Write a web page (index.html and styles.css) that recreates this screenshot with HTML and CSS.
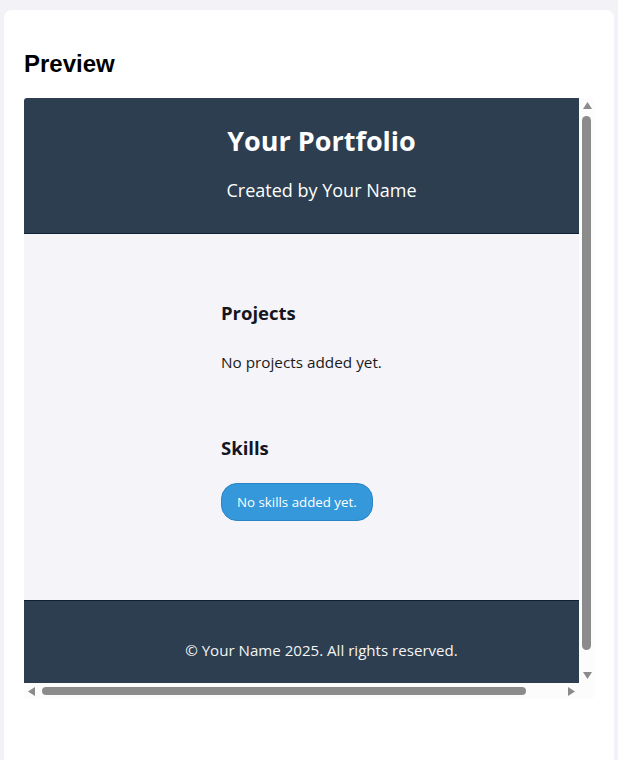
FILE: index.html
```html
<!DOCTYPE html>
<html lang="en">
<head>
<meta charset="utf-8">
<title>Preview</title>
<link rel="stylesheet" href="styles.css">
</head>
<body>
  <div class="card">
    <h2 class="card-title">Preview</h2>
    <div class="frame">
      <div class="viewport">
        <div class="site">
          <header class="site-header">
            <h1 class="site-title">Your Portfolio</h1>
            <p class="site-subtitle">Created by Your Name</p>
          </header>
          <main class="site-main">
            <section class="block">
              <h2 class="block-title">Projects</h2>
              <p class="block-text">No projects added yet.</p>
            </section>
            <section class="block block-skills">
              <h2 class="block-title">Skills</h2>
              <span class="skill-pill">No skills added yet.</span>
            </section>
          </main>
          <footer class="site-footer">
            <p class="footer-text">&copy; Your Name 2025. All rights reserved.</p>
          </footer>
        </div>
      </div>
      <div class="vbar">
        <div class="arrow arrow-v">
          <svg width="9" height="7" viewBox="0 0 9 7"><polygon points="4.5,0 9,7 0,7" fill="#8b8b8b"/></svg>
        </div>
        <div class="vtrack"><div class="vthumb"></div></div>
        <div class="arrow arrow-v">
          <svg width="9" height="7" viewBox="0 0 9 7"><polygon points="0,0 9,0 4.5,7" fill="#8b8b8b"/></svg>
        </div>
      </div>
      <div class="hbar">
        <div class="arrow arrow-h">
          <svg width="7" height="9" viewBox="0 0 7 9"><polygon points="7,0 7,9 0,4.5" fill="#8b8b8b"/></svg>
        </div>
        <div class="htrack"><div class="hthumb"></div></div>
        <div class="arrow arrow-h">
          <svg width="7" height="9" viewBox="0 0 7 9"><polygon points="0,0 7,4.5 0,9" fill="#8b8b8b"/></svg>
        </div>
      </div>
      <div class="corner"></div>
    </div>
  </div>
</body>
</html>
```

FILE: styles.css
```css
html, body {
  margin: 0;
  padding: 0;
}

body {
  background: #f3f3f7;
  font-family: "Liberation Sans", Arial, sans-serif;
}

.card {
  margin: 10px 4px 0;
  padding: 20px;
  min-height: 760px;
  background: #ffffff;
  border-radius: 8px;
  box-sizing: border-box;
}

.card-title {
  margin: 20px 0 20px;
  font-size: 24px;
  line-height: 28px;
  font-weight: 700;
  color: #000000;
}

/* preview frame with its own scrollbars */
.frame {
  width: 570px;
  height: 600px;
  display: grid;
  grid-template-columns: 555px 15px;
  grid-template-rows: 585px 15px;
  background: #fcfcfc;
  border-top-left-radius: 3px;
  overflow: hidden;
}

.viewport {
  overflow: hidden;
}

.vbar {
  display: flex;
  flex-direction: column;
  background: #fcfcfc;
}

.hbar {
  display: flex;
  flex-direction: row;
  background: #fcfcfc;
}

.corner {
  background: #fcfcfc;
}

.arrow {
  flex: 0 0 15px;
  display: flex;
  align-items: center;
  justify-content: center;
}

.arrow-v {
  height: 15px;
}

.arrow-v svg {
  display: block;
  margin-left: 2px;
}

.arrow-h {
  width: 15px;
}

.arrow-h svg {
  display: block;
  margin-top: 1px;
}

.vtrack {
  flex: 1;
  padding: 3px 3px 0 3px;
}

.vthumb {
  width: 9px;
  height: 534px;
  background: #8b8b8b;
  border-radius: 5px;
}

.htrack {
  flex: 1;
  padding: 4px 0 0 3px;
}

.hthumb {
  width: 484px;
  height: 8px;
  background: #8b8b8b;
  border-radius: 4px;
}

/* the previewed page */
.site {
  width: 595px;
  font-family: "Open Sans", "Noto Sans", sans-serif;
  color: #1d1d1f;
}

.site-header {
  background: #2c3e50;
  color: #ffffff;
  text-align: center;
  padding: 24px 0 31px;
  border-bottom: 1px solid #0e2035;
}

.site-title {
  margin: 0;
  font-size: 27px;
  line-height: 38px;
  font-weight: 700;
}

.site-subtitle {
  margin: 18px 0 0;
  font-size: 18px;
  line-height: 24px;
  font-weight: 400;
}

.site-main {
  background: #f4f4f9;
  padding: 66px 0 79px 197px;
}

.block-title {
  margin: 0 0 26px;
  font-size: 18.5px;
  line-height: 26px;
  font-weight: 700;
  color: #15151f;
}

.block-skills {
  margin-top: 63px;
}

.block-skills .block-title {
  margin-bottom: 22px;
}

.block-text {
  margin: 0;
  font-size: 15.3px;
  line-height: 20px;
  color: #1a1a1a;
}

.skill-pill {
  display: inline-block;
  padding: 9px 15px;
  font-size: 13.3px;
  line-height: 18px;
  color: #ffffff;
  background: #3498db;
  border: 1px solid #2a84c6;
  border-radius: 16px;
}

.site-footer {
  background: #2c3e50;
  border-top: 1px solid #0e2035;
  padding: 39px 0 40px;
  text-align: center;
}

.footer-text {
  margin: 0;
  font-size: 15.1px;
  line-height: 20px;
  color: #f4f4f4;
}
```
